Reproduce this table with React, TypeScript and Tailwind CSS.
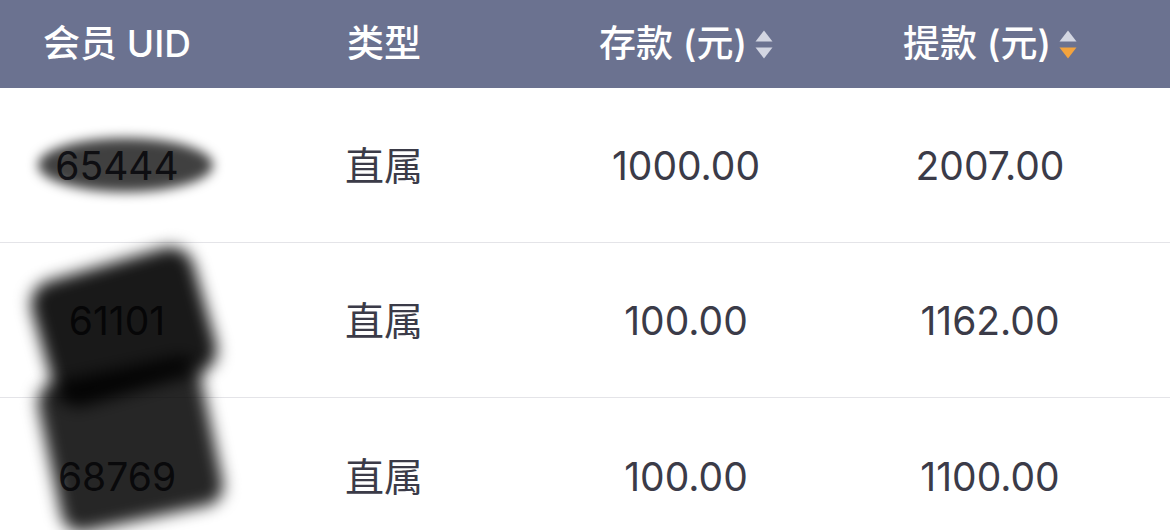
import React from "react"

const rows = [
  { uid: "65444", type: "直属", deposit: "1000.00", withdraw: "2007.00" },
  { uid: "61101", type: "直属", deposit: "100.00", withdraw: "1162.00" },
  { uid: "68769", type: "直属", deposit: "100.00", withdraw: "1100.00" },
]

const cols = "grid grid-cols-[234px_300px_304px_304px]"

function SortIcon({ active }: { active?: "up" | "down" }) {
  return (
    <span className="ml-2 flex shrink-0 flex-col items-center gap-[5px]">
      <svg className="h-[12px] w-[18px]" viewBox="0 0 18 12">
        <path d="M9 0.5 L17.5 11.5 L0.5 11.5 Z" fill={active === "up" ? "#f3a33d" : "#d3d6e2"} />
      </svg>
      <svg className="h-[12px] w-[18px]" viewBox="0 0 18 12">
        <path d="M0.5 0.5 L17.5 0.5 L9 11.5 Z" fill={active === "down" ? "#f3a33d" : "#d3d6e2"} />
      </svg>
    </span>
  )
}

export default function App() {
  return (
    <div
      className="relative h-[530px] w-[1170px] overflow-hidden bg-white"
      style={{ fontFamily: 'Inter, "Noto Sans CJK SC", sans-serif' }}
    >
      {/* header */}
      <div className={`${cols} h-[88px] items-center bg-[#6b7290] text-[37px] font-medium text-white`}>
        <div className="flex justify-center">会员 UID</div>
        <div className="flex justify-center">类型</div>
        <div className="flex items-center justify-center">存款 (元)<SortIcon /></div>
        <div className="flex items-center justify-center">提款 (元)<SortIcon active="down" /></div>
      </div>

      {/* body */}
      {rows.map((r, i) => (
        <div
          key={r.uid}
          className={`${cols} h-[155px] items-center pt-[3px] text-[39px] text-[#3b3b48] ${i < rows.length - 1 ? "border-b border-[#e4e4e8]" : ""}`}
        >
          <div className="flex justify-center">{r.uid}</div>
          <div className="flex justify-center">{r.type}</div>
          <div className="flex justify-center">{r.deposit}</div>
          <div className="flex justify-center">{r.withdraw}</div>
        </div>
      ))}

      {/* hand-drawn redactions */}
      <div className="pointer-events-none absolute left-[38px] top-[138px] h-[54px] w-[175px] rounded-[50%] bg-black/75 blur-[6px]" />
      <div className="pointer-events-none absolute left-[40px] top-[262px] h-[130px] w-[168px] -rotate-[16deg] rounded-[24px] bg-black/90 blur-[8px]" />
      <div className="pointer-events-none absolute left-[48px] top-[368px] h-[152px] w-[165px] -rotate-[12deg] rounded-[20px] bg-black/85 blur-[8px]" />
    </div>
  )
}
